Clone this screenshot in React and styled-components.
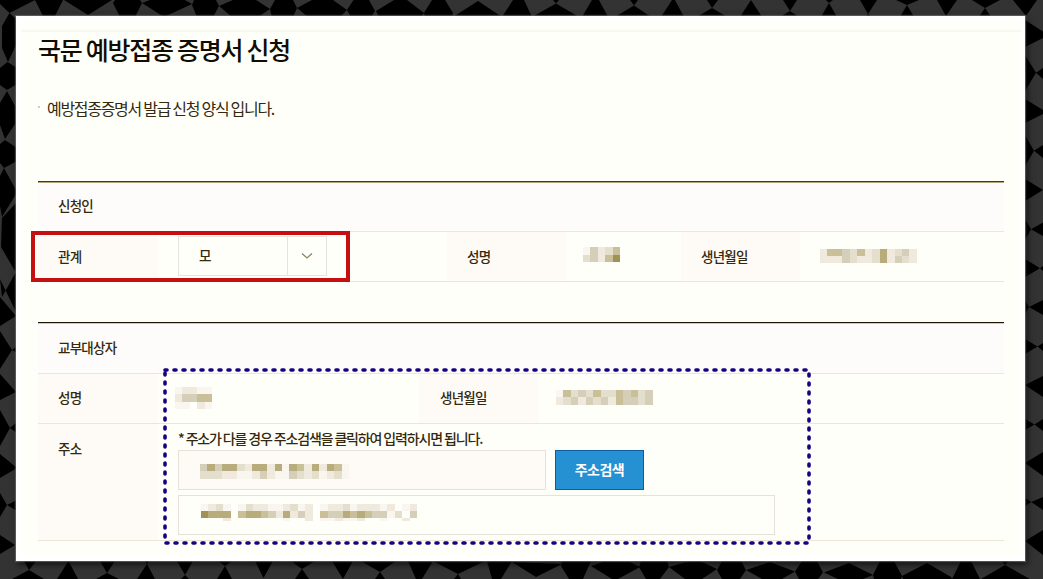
import React from 'react'
import styled, { createGlobalStyle } from 'styled-components'

const GlobalStyle = createGlobalStyle`
  * {
    box-sizing: border-box;
  }
  body {
    margin: 0;
    background: #333;
    overflow: hidden;
  }
`;

const Page = styled.div`
  position: relative;
  width: 1043px;
  height: 579px;
  padding: 16px 18px 18px 16px;
  font-family: "Noto Sans CJK KR", sans-serif;
  color: #33290f;
`;

const Backdrop = styled.svg`
  position: absolute;
  top: 0;
  left: 0;
`;

const Sheet = styled.main`
  position: relative;
  width: 1009px;
  height: 545px;
  background: #fffffa;
  border: 1px solid #fff;
  border-width: 4px 4px 5px 5px;
  padding: 10px 0 0;
  box-shadow: 0 0 1px 1px rgba(120, 120, 120, 0.6), 2px 3px 7px rgba(0, 0, 0, 0.75);
`;

const TopLine = styled.div`
  height: 2px;
  background: #f9f8f0;
`;

const Content = styled.div`
  padding: 0 17px;
`;

const Title = styled.h1`
  margin: 0;
  height: 40px;
  line-height: 35px;
  font-size: 25px;
  font-weight: 500;
  letter-spacing: -1.28px;
  color: #120c02;
  white-space: nowrap;
`;

const Guide = styled.p`
  display: flex;
  align-items: center;
  gap: 7px;
  margin: 23px 0 60px;
  height: 26px;
  font-size: 16px;
  letter-spacing: -1.3px;
  white-space: nowrap;

  &::before {
    content: "";
    width: 2px;
    height: 2px;
    margin-top: -3px;
    background: #d3cdbd;
  }
`;

const Section = styled.section`
  width: 966px;
  border-top: 1px solid ${(props) => props.line};
  margin-bottom: ${(props) => props.gap || "0"};
`;

const SectionHead = styled.h2`
  margin: 0;
  height: ${(props) => props.h};
  padding-left: 20px;
  line-height: ${(props) => props.lh};
  font-size: 13.5px;
  font-weight: 500;
  letter-spacing: -0.75px;
  background: #fdfcfa;
  border-top: 1px solid ${(props) => props.edge};
  border-bottom: 1px solid #e9e8df;
`;

const Row = styled.div`
  display: flex;
  height: ${(props) => props.h || "50px"};
  border-bottom: 1px solid #ebe6da;
`;

const Label = styled.div`
  width: ${(props) => props.w || "120px"};
  padding-left: ${(props) => props.pad || "20px"};
  line-height: ${(props) => props.lh || "48px"};
  font-size: 13.5px;
  font-weight: 500;
  letter-spacing: -0.75px;
  background: #fefbf6;
  white-space: nowrap;
`;

const Cell = styled.div`
  width: ${(props) => props.w};
  padding: ${(props) => props.pad || "0"};
`;

const Select = styled.div`
  display: flex;
  width: 149px;
  height: 40px;
  border: 1px solid #e5e3dc;
  font-size: 13.5px;
  font-weight: 500;
`;

const SelectText = styled.span`
  flex: 1;
  padding-left: 20px;
  line-height: 36px;
`;

const SelectArrow = styled.span`
  display: flex;
  width: 39px;
  align-items: center;
  justify-content: center;
  border-left: 1px solid #e5e3dc;
`;

const Notice = styled.div`
  height: 23px;
  line-height: 23px;
  font-size: 14px;
  font-weight: 500;
  letter-spacing: -1.15px;
  white-space: nowrap;
`;

const AddressLine = styled.div`
  display: flex;
  gap: 9px;
  margin-bottom: 5px;
`;

const Field = styled.div`
  width: ${(props) => props.w};
  height: 40px;
  padding: ${(props) => props.pad};
  border: 1px solid #e6e2da;
  background: ${(props) => props.bg || "transparent"};
`;

const SearchButton = styled.button`
  width: 89px;
  height: 40px;
  padding: 0 0 2px;
  border: 1px solid #0e5ba6;
  background: #2590d2;
  color: #fff;
  font-family: inherit;
  font-size: 14px;
  font-weight: 700;
  letter-spacing: -0.5px;
`;

const MosaicSvg = styled.svg`
  display: block;
`;

const RedMark = styled.div`
  position: absolute;
  left: 31px;
  top: 231px;
  width: 319px;
  height: 51px;
  border: 4px solid #c60f10;
`;

const DottedMark = styled.svg`
  position: absolute;
  left: 160px;
  top: 365px;
`;

// dark facets along each side of the page
const topFacets = [
  "0,0 35,0 9.5,13 0,4",
  "35,0 63,0 55,16 43,16",
  "64,0 112,0 88,15",
  "113,3 115,0 140,0 142,3 135,17 120,17",
  "142,3 150,0 185,0 192,4 164,17",
  "192,5 194,0 216,0 219,6 213,17 197,17",
  "219,6 233,0 256,0 270,9 258,17 232,17",
  "270,9 275,0 293,0 297,8 293,17 272,17",
  "297,8 312,0 333,0 347,10 340,17 308,17",
  "347,10 353.5,0 369,0 375,11 371,17 351,17",
  "376,11 394,0 407,0 424,13 421,17 379,17",
  "432,0 445,0 453,13 452,17 425,17 424,13",
  "478,1 502,17 453,17",
  "513,0 524,0 532,17 502,17",
  "553,0 559,0 556,3.5",
  "556,3.5 579,17 532,17",
  "592,0 599,0 608,17 582,17",
  "630,0 638,0 634,5.5",
  "634,5.5 651,17 615,17",
  "672,0 675,0 684,17 661,17",
  "707,0 718,0 712,8",
  "712,8 727,17 697,17",
  "751,0 762,17 740,17",
  "783,0 797,0 790,11",
  "790,11 799,17 780,17",
  "826,0 833,0 829,3",
  "829,3 837,17 821,17",
  "860,0 877,0 868,14",
  "868,14 872,17 865,17",
  "896,0 919,0 907,5",
  "907,5 914,17 900,17",
  "937,0 957,0 946,16",
  "972,0 1000,0 985,8",
  "985,8 991,17 979,17",
  "1013,0 1037,0 1026,16",
];

const rightFacets = [
  "1025,20 1043,31.5 1043,38 1025,47",
  "1025,55 1036,72.7 1025,91",
  "1036,72.7 1043,68 1043,79",
  "1025,99 1043,110 1043,114 1025,123",
  "1025,135 1034,150.7 1025,166",
  "1034,150.7 1043,145 1043,158",
  "1025,179 1043,190 1025,201",
  "1025,219 1031,229.3 1025,240",
  "1031,229.3 1043,222.6 1043,236",
  "1025,259 1040,268.3 1025,277",
  "1040,268.3 1043,266 1043,271",
  "1025,300 1029,307 1025,314",
  "1029,307 1043,300 1043,315",
  "1025,339 1037.5,346.5 1025,354",
  "1037.5,346.5 1043,343 1043,351",
  "1025,385 1043,376 1043,397",
  "1025,419 1034.5,424.5 1025,430",
  "1034.5,424.5 1043,419 1043,431",
  "1025,463 1043,452 1043,476",
  "1025,498 1031.3,502 1025,506",
  "1031.3,502 1043,497 1043,510",
  "1025,541 1043,530 1043,555",
];

const bottomFacets = [
  "24,561 36,561 29,570",
  "29,570 44,579 12,579",
  "68.5,561 78,579 57,579",
  "100,561 115,561 107,573",
  "107,573 119,579 96,579",
  "145,561 149,561 147,564",
  "147,564 155,579 137,579",
  "177,561 193,561 185,575",
  "185,575 189,579 181,579",
  "218,561 232,561 225,566",
  "225,566 232,579 217,579",
  "255,561 273,561 263.5,578",
  "291,561 315,561 302,569",
  "302,569 309,579 295,579",
  "332,561 353,561 343,579",
  "361,561 396,561 380,572",
  "380,572 385,579 375,579",
  "408,561 433,561 422,579 416,579",
  "433,561 485,561 458,574",
  "458,574 461,579 454,579",
  "487,561 512,561 501,579 492,579",
  "512,562 562,564 536,577",
  "562,561 591,561 583,579 569,579 561,566",
  "591,566 603,562 630,562 640,567 618,579 612,579",
  "641,561 667,561 669,567 660,579 646,579 639,567",
  "669,567 690,561 700,561 717,569 702,579 685,579",
  "722,561 741,561 746,570 740,579 722,579 717,570",
  "746,570 770,562 795,571.5 782,579 762,579",
  "802,561 817,561 823,572.5 818,579 799,579 795,571.5",
  "824,572.5 849,563 873,575 863,579 838,579",
  "880,561 894,561 902,576 901,579 874,579 873,575",
  "902,576 927,563 951,577 952,579 903,579",
  "961,561 971,561 980,579 952,579",
  "1002,561 1008,561 1005,565",
  "1005,565 1030,579 981,579",
];

const leftFacets = [
  "9.5,13 17,20 17,43 8,62 2,48 2,26",
  "7.5,62 0,68 0,85 7,90 17,84 17,68",
  "7,91 0,103 0,125 5,139 15,124 15,106",
  "5,140 0,144 0,163 4,168 17,161 17,148",
  "4,168 0,176 0,206 2,217 16,194 16,190",
  "2,218 17,202 17,272 15,271 1,247",
  "0,279 2,297 16,272 17,314",
  "0,297 0,326 16,316",
  "12,350 0,331 0,369",
  "12,350 17,346 17,353",
  "0,374 16,392 0,400",
  "10,428 0,410 0,446",
  "10,428 17,422 17,433",
  "0,454 17,468 0,478",
  "0,493 7,505 0,517",
  "7,505 17,500 17,511",
  "0,535 15,545 0,554",
];

const Facets = () => (
  <Backdrop width="1043" height="579" viewBox="0 0 1043 579">
    <rect width="1043" height="579" fill="#333" />
    {[...topFacets, ...rightFacets, ...bottomFacets, ...leftFacets].map((points) => (
      <polygon key={points} points={points} fill="#000" />
    ))}
  </Backdrop>
)

// each string is one line of blocks, "." leaves a gap
const tones = {
  a: "#f8f6ee",
  b: "#efeadd",
  c: "#e4dfcc",
  d: "#d5cfba",
  e: "#c9bf98",
  f: "#b8ab7c",
  g: "#a29059",
}

const Mosaic = ({ rows, heights, size = 7.45 }) => {
  const total = heights.reduce((sum, h) => sum + h, 0)
  let y = 0
  return (
    <MosaicSvg width={rows[0].length * size} height={total} shapeRendering="crispEdges">
      {rows.map((row, r) => {
        const top = y
        y += heights[r]
        return row.split("").map((tone, i) => (
          tone !== "." && <rect key={r + "-" + i} x={i * size} y={top} width={size} height={heights[r]} fill={tones[tone]} />
        ))
      })}
    </MosaicSvg>
  )
}

const App = () => {
  return (
    <Page>
      <GlobalStyle />
      <Facets />
      <Sheet>
        <TopLine />
        <Content>
          <Title>국문 예방접종 증명서 신청</Title>
          <Guide>예방접종증명서 발급 신청 양식 입니다.</Guide>

          <Section line="#43391b" gap="40px">
            <SectionHead h="50px" lh="45px" edge="#b3a67c">신청인</SectionHead>
            <Row>
              <Label>관계</Label>
              <Cell w="289px" pad="4px 0 0 20px">
                <Select>
                  <SelectText>모</SelectText>
                  <SelectArrow>
                    <svg width="12" height="8" viewBox="0 0 12 8" fill="none" stroke="#8c8163" strokeWidth="1.3">
                      <path d="M1 1.5L6 6L11 1.5" />
                    </svg>
                  </SelectArrow>
                </Select>
              </Cell>
              <Label w="119px">성명</Label>
              <Cell w="115px" pad="15px 0 0 17px">
                <Mosaic rows={["adbce", "cdbeg"]} heights={[8, 7]} />
              </Cell>
              <Label w="119px">생년월일</Label>
              <Cell pad="17px 0 0 20px">
                <Mosaic rows={["beedcebcfbcdb", "bbbdcbbcfbdcb"]} heights={[7, 7]} />
              </Cell>
            </Row>
          </Section>

          <Section line="#1d1404">
            <SectionHead h="51px" lh="47px" edge="#cfc9b8">교부대상자</SectionHead>
            <Row>
              <Label lh="47px">성명</Label>
              <Cell w="261px" pad="13px 0 0 17px">
                <Mosaic rows={["abbaa", "bddee", "aa.ba"]} heights={[7, 8, 7]} />
              </Cell>
              <Label w="119px" pad="21px" lh="47px">생년월일</Label>
              <Cell pad="16px 0 0 18px">
                <Mosaic rows={["aecdceccedecd", "bcdbdcdbeddcd"]} heights={[7, 8]} />
              </Cell>
            </Row>
            <Row h="117px">
              <Label>주소</Label>
              <Cell pad="3px 0 0 20px">
                <Notice>* 주소가 다를 경우 주소검색을 클릭하여 입력하시면 됩니다.</Notice>
                <AddressLine>
                  <Field w="368px" pad="13px 0 0 21px" bg="#fefbf6">
                    <Mosaic rows={["dfdffcbffbfafebfbfea", "cccbbaabdbaadcbcabca"]} heights={[7, 8]} />
                  </Field>
                  <SearchButton>주소검색</SearchButton>
                </AddressLine>
                <Field w="597px" pad="8px 0 0 22px">
                  <Mosaic
                    rows={["abca.acbbaabcab.abbcabbbab.ab", "gfff.effedbfbdb.eddfefeddac.df", "...b.......a..b.aabaab..a..b."].map((r) => r.slice(0, 29))}
                    heights={[7, 7, 3]}
                  />
                </Field>
              </Cell>
            </Row>
          </Section>
        </Content>
      </Sheet>
      <RedMark />
      <DottedMark width="652" height="181" fill="none" stroke="#170082" strokeWidth="3.6" strokeLinecap="round">
        <rect x="5" y="5" width="644" height="173" strokeDasharray="2 7" />
      </DottedMark>
    </Page>
  )
}

export default App
